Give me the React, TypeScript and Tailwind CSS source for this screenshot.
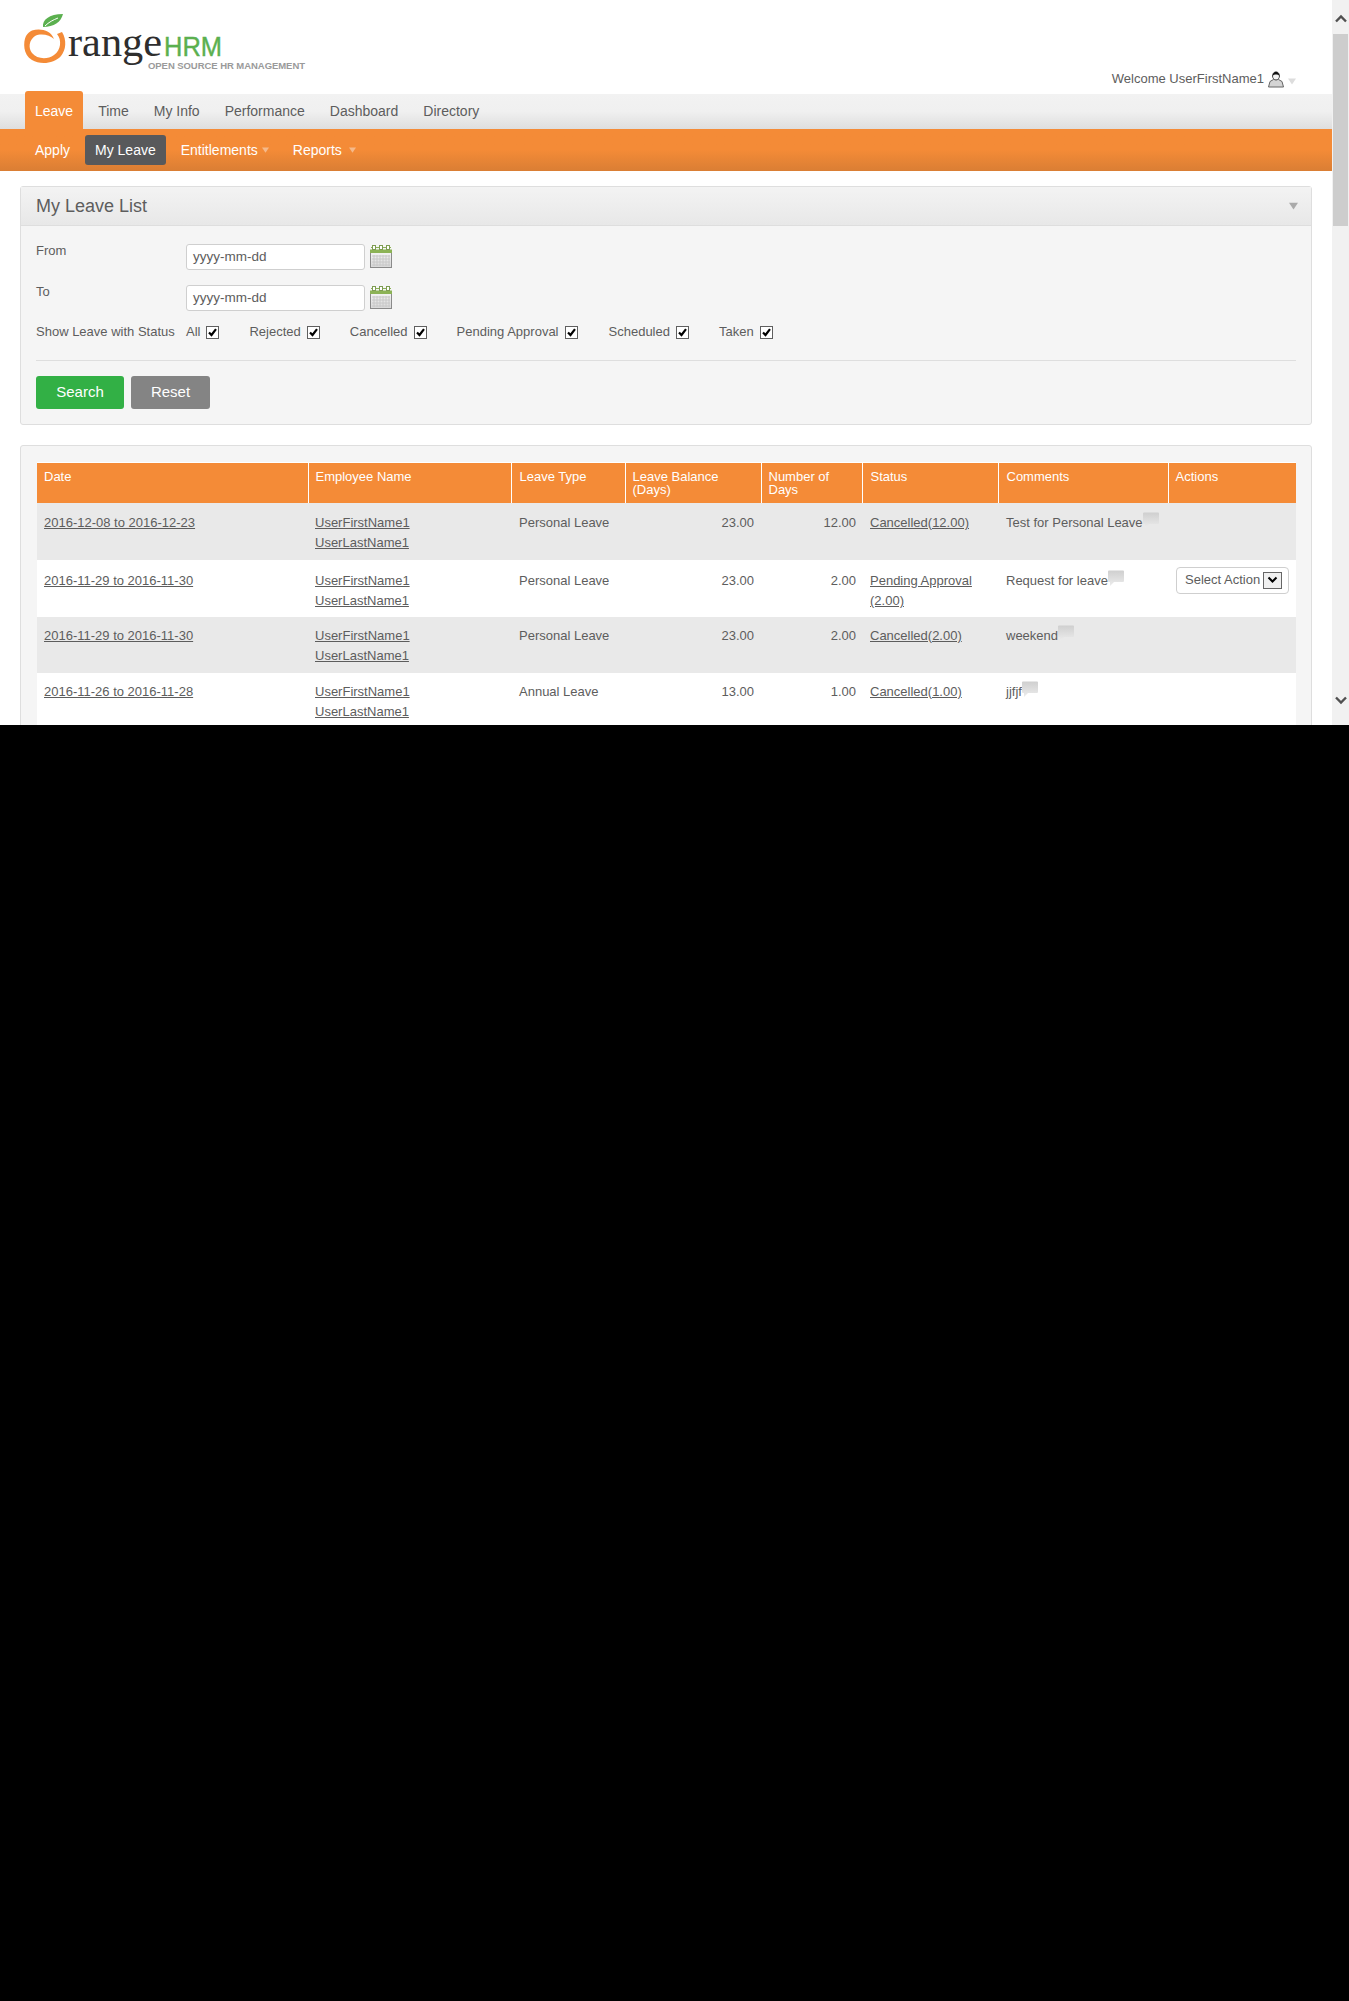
import React from "react";

const font = "font-['Liberation_Sans',Arial,sans-serif]";

function Logo() {
  return (
    <svg width="300" height="70" viewBox="0 0 300 70" className="block">
      <path d="M23 27 C22 20 29 14 43 14 C41 22 34 27 23 27 Z" fill="#5bb04f" />
      <path d="M25 26 C29 22 33 20 38 18" stroke="#fff" strokeWidth="1" fill="none" />
      <path d="M12 30.5 C20 28 31 30 34 39 C30 35 21 33 15 36 C9 40 8 48 12 53 C17 59 27 60 34 55 C41 50 42 40 37 34 L42 32 C47 40 46 50 41 56 C34 64 20 65 12 60 C3 55 3 42 6 36 C7.5 33.5 9.5 31.5 12 30.5 Z" fill="#f48b37" />
      <text x="48" y="56" fontFamily="'Liberation Serif', serif" fontSize="42" fill="#2e2e2e" textLength="94" lengthAdjust="spacingAndGlyphs">range</text>
      <text x="144" y="56" fontFamily="'Liberation Sans', sans-serif" fontSize="27" fill="#5bb04f" stroke="#5bb04f" strokeWidth="0.4" textLength="58" lengthAdjust="spacingAndGlyphs">HRM</text>
      <text x="128" y="68.5" fontFamily="'Liberation Sans', sans-serif" fontSize="9.5" fontWeight="700" fill="#9a9a9a" textLength="157" lengthAdjust="spacing">OPEN SOURCE HR MANAGEMENT</text>
    </svg>
  );
}

function Tri({ c = "#bbb", w = 8, h = 6 }: { c?: string; w?: number; h?: number }) {
  return (
    <svg width={w} height={h} viewBox="0 0 8 6" className="inline-block">
      <path d="M0 0H8L4 6Z" fill={c} />
    </svg>
  );
}

function UserIcon() {
  return (
    <svg width="16" height="17" viewBox="0 0 16 17" className="block">
      <path d="M0.5 16 L2 10.5 L5.5 8.5 H10.5 L14 10.5 L15.5 16 Z" fill="#d4d4d4" stroke="#666" strokeWidth="1" />
      <path d="M4.5 5 C4.5 2.5 6 1 8 1 C10 1 11.5 2.5 11.5 5 C11.5 7 10 9 8 9 C6 9 4.5 7 4.5 5 Z" fill="#f4f4f4" stroke="#444" strokeWidth="1" />
      <path d="M4.8 4.5 C5 2 6.5 0.8 8 0.8 C9.5 0.8 11 2 11.2 4.5 C10 3 6 3 4.8 4.5 Z" fill="#111" />
    </svg>
  );
}

function Calendar() {
  return (
    <svg width="22" height="23" viewBox="0 0 22 23" className="block">
      <defs>
        <linearGradient id="calg" x1="0" y1="0" x2="0" y2="1">
          <stop offset="0" stopColor="#f6f6f6" />
          <stop offset="1" stopColor="#d8d8d8" />
        </linearGradient>
      </defs>
      <rect x="0.5" y="5.5" width="21" height="17" fill="url(#calg)" stroke="#8a8a8a" />
      <rect x="0" y="4.5" width="22" height="3.5" fill="#8cb356" />
      <path d="M1 2.5H21" stroke="#8cb356" />
      {[4, 11, 18].map((x) => (
        <rect key={x} x={x - 1.5} y="0.5" width="3" height="4" fill="#fff" stroke="#7e9c53" />
      ))}
      {[4, 7, 10, 13, 16, 19].map((x) => (
        <path key={x} d={`M${x} 10V21`} stroke="#c8c8c8" />
      ))}
      {[11, 14, 17, 20].map((y) => (
        <path key={y} d={`M2 ${y}H20`} stroke="#c8c8c8" />
      ))}
    </svg>
  );
}

function Check() {
  return (
    <span className="inline-flex w-[13px] h-[13px] border border-[#5f5f5f] bg-white items-center justify-center shrink-0">
      <svg width="11" height="11" viewBox="0 0 11 11">
        <path d="M2 5.5 L4.5 8 L9 2.2" stroke="#000" strokeWidth="2.2" fill="none" />
      </svg>
    </span>
  );
}

function Bubble() {
  return (
    <svg width="16" height="18" viewBox="0 0 16 18" className="inline-block align-top -mt-px">
      <defs>
        <linearGradient id="bub" x1="0" y1="0" x2="0" y2="1">
          <stop offset="0" stopColor="#cfcfcf" />
          <stop offset="1" stopColor="#ececec" />
        </linearGradient>
      </defs>
      <path d="M1 0.5H15a1 1 0 0 1 1 1V11a1 1 0 0 1-1 1H6L2 16V12H1a1 1 0 0 1-1-1V1.5a1 1 0 0 1 1-1Z" fill="url(#bub)" />
    </svg>
  );
}

function Chevron({ up }: { up?: boolean }) {
  return (
    <svg width="12" height="9" viewBox="0 0 12 9" className="block">
      <path d={up ? "M1 7.5 L6 2.5 L11 7.5" : "M1 1.5 L6 6.5 L11 1.5"} stroke="#505050" strokeWidth="2.4" fill="none" />
    </svg>
  );
}

const statuses: [string, string][] = [
  ["All", "mr-[30px]"],
  ["Rejected", "mr-[30px]"],
  ["Cancelled", "mr-[30px]"],
  ["Pending Approval", "mr-[31px]"],
  ["Scheduled", "mr-[30px]"],
  ["Taken", ""],
];

type Row = {
  date: string;
  type: string;
  bal: string;
  num: string;
  status: string[];
  comment: string;
  action?: boolean;
  rowClass: string;
  cellClass: string;
};

const rows: Row[] = [
  { date: "2016-12-08 to 2016-12-23", type: "Personal Leave", bal: "23.00", num: "12.00", status: ["Cancelled(12.00)"], comment: "Test for Personal Leave", rowClass: "bg-[#e9e9e9] h-[57px]", cellClass: "pt-[10px]" },
  { date: "2016-11-29 to 2016-11-30", type: "Personal Leave", bal: "23.00", num: "2.00", status: ["Pending Approval", "(2.00)"], comment: "Request for leave", action: true, rowClass: "bg-white h-[57px]", cellClass: "pt-[11px]" },
  { date: "2016-11-29 to 2016-11-30", type: "Personal Leave", bal: "23.00", num: "2.00", status: ["Cancelled(2.00)"], comment: "weekend", rowClass: "bg-[#e9e9e9] h-[56px]", cellClass: "pt-[9px]" },
  { date: "2016-11-26 to 2016-11-28", type: "Annual Leave", bal: "13.00", num: "1.00", status: ["Cancelled(1.00)"], comment: "jjfjf", rowClass: "bg-white h-[56px]", cellClass: "pt-[9px]" },
];

const heads: [string[], string, string][] = [
  [["Date"], "w-[271px]", "pl-[7px]"],
  [["Employee Name"], "w-[203px]", "pl-[7px]"],
  [["Leave Type"], "w-[114px]", "pl-[8px]"],
  [["Leave Balance", "(Days)"], "w-[136px]", "pl-[7px]"],
  [["Number of", "Days"], "w-[101px]", "pl-[7px]"],
  [["Status"], "w-[136px]", "pl-[8px]"],
  [["Comments"], "w-[170px]", "pl-[8px]"],
  [["Actions"], "w-[128px]", "pl-[7px]"],
];

export default function App() {
  return (
    <div className={`${font} min-h-[2001px] bg-black`}>
      <div className="h-[725px] overflow-hidden flex bg-white text-[#5d5d5d]">
        <div className="w-[1332px] shrink-0">
          {/* header */}
          <div className="h-[94px] flex justify-between pl-[20px] pr-[36px]">
            <Logo />
            <div className="flex items-center self-end h-[20px] mb-[5px] gap-[4px] text-[13px]">
              <span>Welcome UserFirstName1</span>
              <UserIcon />
              <span className="mt-[3px]">
                <Tri c="#dddddd" w={8} h={7} />
              </span>
            </div>
          </div>
          {/* main menu */}
          <div className="h-[35px] bg-gradient-to-b from-[#f2f2f2] via-[#f0f0f0] to-[#dedede] pl-[25px] flex gap-[5px] text-[14px]">
            <div className="-mt-[3px] h-[38px] px-[10px] bg-[#f48b37] rounded-t-[3px] text-white flex items-center pt-[3px]">Leave</div>
            <div className="px-[10px] flex items-center">Time</div>
            <div className="px-[10px] flex items-center">My Info</div>
            <div className="px-[10px] flex items-center">Performance</div>
            <div className="px-[10px] flex items-center">Dashboard</div>
            <div className="px-[10px] flex items-center">Directory</div>
          </div>
          {/* sub menu */}
          <div className="h-[42px] bg-gradient-to-b from-[#f48b37] via-[#f48b37] to-[#da7e34] pl-[25px] flex items-center gap-[5px] text-[14px] text-white">
            <div className="px-[10px]">Apply</div>
            <div className="px-[10px] h-[30px] flex items-center bg-[#58595b] rounded-[3px]">My Leave</div>
            <div className="pl-[10px] pr-[9px] flex items-center gap-[4px]">
              Entitlements <Tri c="#f5b98a" w={7} h={6} />
            </div>
            <div className="px-[10px] flex items-center gap-[7px]">
              Reports <Tri c="#f5b98a" w={7} h={6} />
            </div>
          </div>

          {/* filter panel */}
          <div className="mx-[20px] mt-[15px] border border-[#dedede] rounded-[3px] bg-[#f5f5f5]">
            <div className="h-[39px] bg-gradient-to-b from-[#f3f3f3] to-[#e8e8e8] border-b border-[#dedede] pl-[15px] pr-[13px] flex items-center justify-between">
              <h1 className="text-[18px]">My Leave List</h1>
              <Tri c="#aaaaaa" w={9} h={8} />
            </div>
            <div className="px-[15px] pt-[18px] pb-[15px] text-[13px]">
              <div className="flex h-[27px]">
                <label className="w-[150px] leading-[15px] -mt-px">From</label>
                <div className="h-[26px] w-[179px] border border-[#cfcfcf] rounded-[3px] bg-white pl-[6px] text-[13.5px] leading-[24px]">yyyy-mm-dd</div>
                <div className="ml-[5px] mt-px"><Calendar /></div>
              </div>
              <div className="flex h-[27px] mt-[14px]">
                <label className="w-[150px] leading-[15px] -mt-px">To</label>
                <div className="h-[26px] w-[179px] border border-[#cfcfcf] rounded-[3px] bg-white pl-[6px] text-[13.5px] leading-[24px]">yyyy-mm-dd</div>
                <div className="ml-[5px] mt-px"><Calendar /></div>
              </div>
              <div className="flex items-center h-[20px] mt-[10px]">
                <span className="w-[150px]">Show Leave with Status</span>
                {statuses.map(([l, m]) => (
                  <span key={l} className={`flex items-center gap-[6px] ${m}`}>
                    {l}
                    <Check />
                  </span>
                ))}
              </div>
              <div className="border-t border-[#dedede] mt-[18px]" />
              <div className="flex gap-[7px] mt-[15px] text-[15px] text-white">
                <button className="w-[88px] h-[33px] rounded-[3px] bg-[#32b045]">Search</button>
                <button className="w-[79px] h-[33px] rounded-[3px] bg-[#848484]">Reset</button>
              </div>
            </div>
          </div>

          {/* results panel */}
          <div className="mx-[20px] mt-[20px] border border-[#dedede] rounded-[3px] bg-[#f5f5f5] pl-[16px] pr-[15px] pt-[16px] pb-[20px]">
            <table className="w-[1259px] table-fixed border-collapse text-[13px]">
              <thead>
                <tr className="h-[40px] bg-[#f48b37] text-white border-t border-white">
                  {heads.map(([lines, w, p], i) => (
                    <th key={i} className={`${w} ${p} align-top text-left font-normal leading-[13px] pt-[7px] ${i ? "border-l border-white" : ""}`}>
                      {lines.map((t) => (
                        <div key={t}>{t}</div>
                      ))}
                    </th>
                  ))}
                </tr>
              </thead>
              <tbody className="leading-[20px]">
                {rows.map((r, i) => (
                  <tr key={i} className={r.rowClass}>
                    <td className={`align-top pl-[7px] ${r.cellClass}`}><a className="underline">{r.date}</a></td>
                    <td className={`align-top pl-[7px] ${r.cellClass}`}>
                      <a className="underline block">UserFirstName1</a>
                      <a className="underline block">UserLastName1</a>
                    </td>
                    <td className={`align-top pl-[8px] ${r.cellClass}`}>{r.type}</td>
                    <td className={`align-top text-right pr-[7px] ${r.cellClass}`}>{r.bal}</td>
                    <td className={`align-top text-right pr-[6px] ${r.cellClass}`}>{r.num}</td>
                    <td className={`align-top pl-[8px] ${r.cellClass}`}>
                      {r.status.map((s) => (
                        <a key={s} className="underline block">{s}</a>
                      ))}
                    </td>
                    <td className={`align-top pl-[8px] ${r.cellClass}`}>
                      {r.comment}
                      <Bubble />
                    </td>
                    <td className={`align-top pl-[8px] ${r.action ? "pt-[7px]" : r.cellClass}`}>
                      {r.action && (
                        <div className="w-[113px] h-[27px] border border-[#cfcfcf] rounded-[4px] bg-white flex items-center pl-[8px] whitespace-nowrap justify-between pr-[6px]">
                          <span>Select Action</span>
                          <span className="w-[19px] h-[17px] border border-[#666] bg-[#f0f0f0] flex items-center justify-center shrink-0">
                            <svg width="11" height="8" viewBox="0 0 11 8">
                              <path d="M1.5 1.5 L5.5 5.5 L9.5 1.5" stroke="#000" strokeWidth="2" fill="none" />
                            </svg>
                          </span>
                        </div>
                      )}
                    </td>
                  </tr>
                ))}
              </tbody>
            </table>
          </div>
        </div>
        {/* scrollbar */}
        <div className="w-[17px] shrink-0 bg-[#f1f1f1] flex flex-col items-center h-[725px]">
          <div className="h-[34px] flex items-center justify-center pt-[2px]"><Chevron up /></div>
          <div className="w-[15px] h-[192px] bg-[#cdcdcd]" />
          <div className="flex-1" />
          <div className="h-[34px] flex items-start justify-center pt-[5px]"><Chevron /></div>
        </div>
      </div>
    </div>
  );
}
